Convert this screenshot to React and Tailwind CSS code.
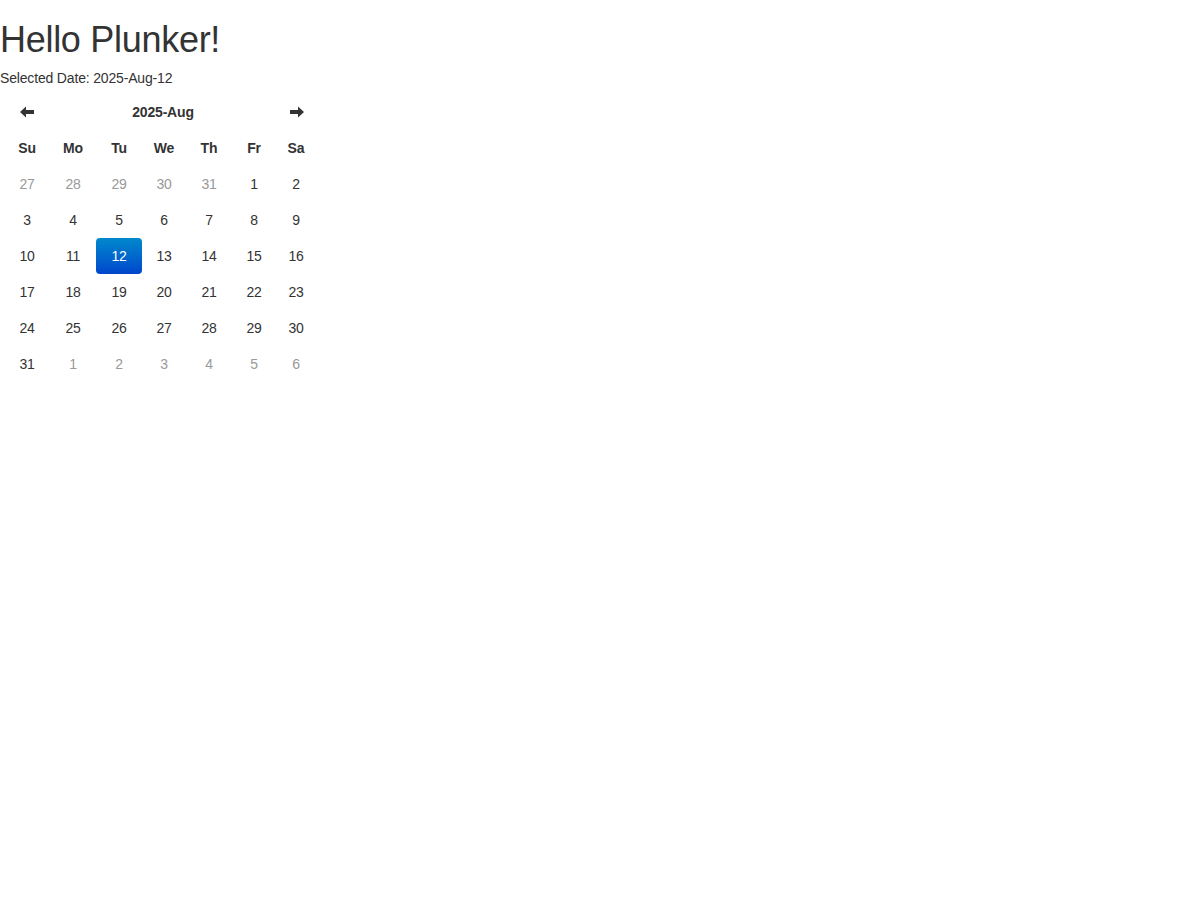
const weekdays = ["Su", "Mo", "Tu", "We", "Th", "Fr", "Sa"];

const weeks = [
  [[27, true], [28, true], [29, true], [30, true], [31, true], [1], [2]],
  [[3], [4], [5], [6], [7], [8], [9]],
  [[10], [11], [12], [13], [14], [15], [16]],
  [[17], [18], [19], [20], [21], [22], [23]],
  [[24], [25], [26], [27], [28], [29], [30]],
  [[31], [1, true], [2, true], [3, true], [4, true], [5, true], [6, true]],
];

const cols = "grid grid-cols-[46px_46px_46px_44px_46px_44px_40px]";

function Arrow({ dir }) {
  return (
    <svg width="15" height="12" viewBox="0 0 15 12" className="block">
      {dir === "left" ? (
        <path d="M0 6 L6 0.5 L6 4 L14 4 L14 8 L6 8 L6 11.5 Z" fill="#333" />
      ) : (
        <path d="M15 6 L9 0.5 L9 4 L1 4 L1 8 L9 8 L9 11.5 Z" fill="#333" />
      )}
    </svg>
  );
}

export default function App() {
  const selected = 12;

  return (
    <div className="min-h-screen bg-white text-[#333] text-[14px] leading-5 tracking-[-0.012em] font-['Liberation_Sans',Arial,sans-serif]">
      <h1 className="text-[36px] leading-[1.1] mt-5 mb-2 font-normal tracking-[-0.008em]">
        Hello Plunker!
      </h1>
      <div>Selected Date: 2025-Aug-12</div>

      <div className="pt-[6px] px-1 pb-1 w-fit">
        <div className={cols}>
          <div className="h-9 flex items-center justify-center">
            <Arrow dir="left" />
          </div>
          <div className="col-span-5 h-9 flex items-center justify-center font-bold">
            2025-Aug
          </div>
          <div className="h-9 flex items-center justify-center">
            <Arrow dir="right" />
          </div>

          {weekdays.map((d) => (
            <div key={d} className="h-9 flex items-center justify-center font-bold">
              {d}
            </div>
          ))}

          {weeks.map((week, wi) =>
            week.map(([n, other], di) => {
              const isSel = !other && n === selected;
              return (
                <div
                  key={`${wi}-${di}`}
                  className={`h-9 flex items-center justify-center ${
                    other ? "text-[#999]" : ""
                  } ${
                    isSel
                      ? "text-white rounded bg-gradient-to-b from-[#0088cc] to-[#0044cc]"
                      : ""
                  }`}
                >
                  {n}
                </div>
              );
            }),
          )}
        </div>
      </div>
    </div>
  );
}
